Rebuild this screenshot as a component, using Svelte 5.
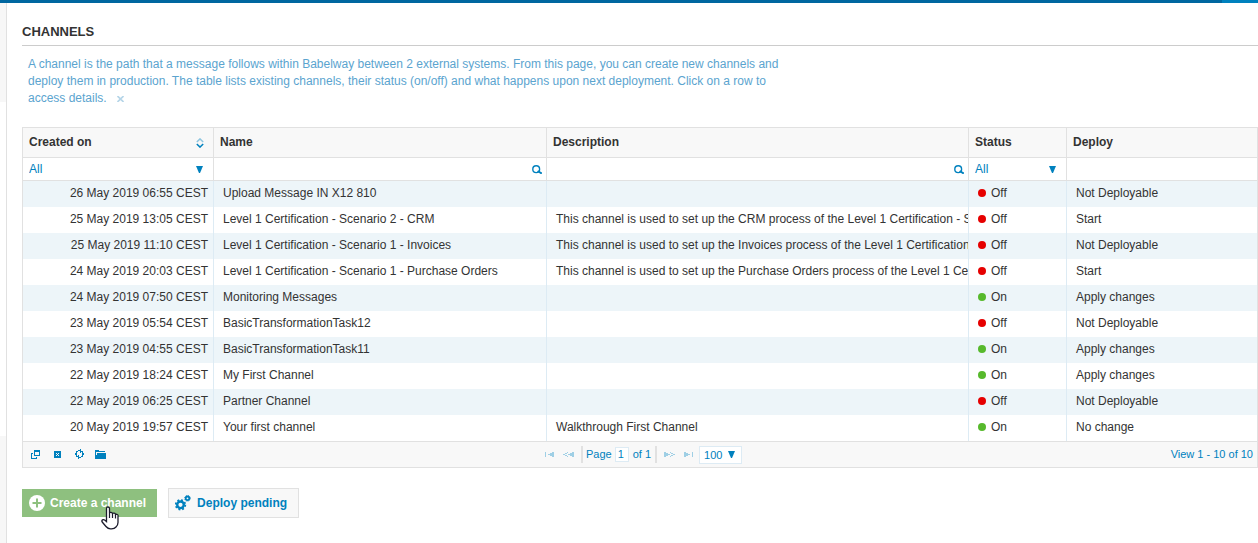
<script>
  const channels = [
    ['26 May 2019 06:55 CEST', 'Upload Message IN X12 810', '', 'Off', 'Not Deployable'],
    ['25 May 2019 13:05 CEST', 'Level 1 Certification - Scenario 2 - CRM', 'This channel is used to set up the CRM process of the Level 1 Certification - Scenario 2', 'Off', 'Start'],
    ['25 May 2019 11:10 CEST', 'Level 1 Certification - Scenario 1 - Invoices', 'This channel is used to set up the Invoices process of the Level 1 Certification - Scenario 1', 'Off', 'Not Deployable'],
    ['24 May 2019 20:03 CEST', 'Level 1 Certification - Scenario 1 - Purchase Orders', 'This channel is used to set up the Purchase Orders process of the Level 1 Certification', 'Off', 'Start'],
    ['24 May 2019 07:50 CEST', 'Monitoring Messages', '', 'On', 'Apply changes'],
    ['23 May 2019 05:54 CEST', 'BasicTransformationTask12', '', 'Off', 'Not Deployable'],
    ['23 May 2019 04:55 CEST', 'BasicTransformationTask11', '', 'On', 'Apply changes'],
    ['22 May 2019 18:24 CEST', 'My First Channel', '', 'On', 'Apply changes'],
    ['22 May 2019 06:25 CEST', 'Partner Channel', '', 'Off', 'Not Deployable'],
    ['20 May 2019 19:57 CEST', 'Your first channel', 'Walkthrough First Channel', 'On', 'No change']
  ].map(([created, name, description, status, deploy]) => ({ created, name, description, status, deploy }));
</script>

{#snippet caret()}
  <svg class="caret" width="7" height="7" viewBox="0 0 7 7" aria-hidden="true"><path d="M0 0h7L4 7H3z" /></svg>
{/snippet}

{#snippet search(label)}
  <label class="control find">
    <input type="text" aria-label={label} />
    <svg width="10" height="9" viewBox="0 0 10 9" aria-hidden="true">
      <circle cx="4.200" cy="4.200" r="3.400" fill="none" stroke="#0081be" stroke-width="1.400" />
      <path d="M6.500 6.500l2.500 1.500" stroke="#0081be" stroke-width="2" stroke-linecap="square" />
    </svg>
  </label>
{/snippet}

<div class="page">
  <header class="topbar"><span></span></header>
  <div class="layout">
    <aside><span></span><span></span></aside>
    <main>
      <h1>CHANNELS</h1>
      <p class="intro">
        A channel is the path that a message follows within Babelway between 2 external systems. From this page, you can create new channels and deploy them in production. The table lists existing channels, their status (on/off) and what happens upon next deployment. Click on a row to access details.
        <button class="close" aria-label="Close"><svg width="7" height="6" viewBox="0 0 7 6"><path d="M.5 0l6 6M6.5 0l-6 6" stroke="#b5d5e8" stroke-width="1.6" /></svg></button>
      </p>

      <section class="grid">
        <table>
          <colgroup><col class="c-date" /><col class="c-name" /><col /><col class="c-status" /><col class="c-deploy" /></colgroup>
          <thead>
            <tr class="titles">
              <th><div class="sortable">Created on
                <svg width="8" height="10" viewBox="0 0 8 10" fill="none" stroke-width="1.5" aria-hidden="true">
                  <path d="M.8 4L4 .9 7.200 4" stroke="#8fc6e0" /><path d="M.8 6L4 9.100 7.200 6" stroke="#0081be" />
                </svg></div></th>
              <th>Name</th><th>Description</th><th>Status</th><th>Deploy</th>
            </tr>
            <tr class="filters">
              <td><label class="control pick"><select aria-label="Created on"><option>All</option></select>{@render caret()}</label></td>
              <td>{@render search('Name')}</td>
              <td>{@render search('Description')}</td>
              <td><label class="control pick"><select aria-label="Status"><option>All</option></select>{@render caret()}</label></td>
              <td></td>
            </tr>
          </thead>
          <tbody>
            {#each channels as c}
              <tr>
                <td class="date">{c.created}</td>
                <td>{c.name}</td>
                <td>{c.description}</td>
                <td><span class="status"><i class:on={c.status === 'On'}></i>{c.status}</span></td>
                <td>{c.deploy}</td>
              </tr>
            {/each}
          </tbody>
        </table>

        <footer>
          <div class="tools">
            <button aria-label="Columns"><svg width="12" height="12" viewBox="0 -1 12 12"><path d="M3 0h6v6H3zM4 2v3h4V2zM0 3h2v1H1v4h4V7h1v2H0z" fill-rule="evenodd" /></svg></button>
            <button aria-label="Export"><svg width="12" height="12" viewBox="-1 -1 12 12"><path d="M1 1h7v7H1zM3 3v1h1V3zM5 3v1h1V3zM4 4v1h1V4zM3 5v1h1V5zM5 5v1h1V5z" fill-rule="evenodd" /></svg></button>
            <button aria-label="Refresh"><svg width="12" height="12" viewBox="-2 -1 12 12"><path d="M5 -1h1v1H5zM3 0h3v1H3zM1 1h2v1H1zM5 1h3v1H5zM1 2h1v1H1zM5 2h1v1H5zM7 2h1v1H7zM0 3h2v2H0zM7 3h2v2H7zM1 5h1v1H1zM3 5h1v1H3zM7 5h1v1H7zM1 6h3v1H1zM6 6h2v1H6zM3 7h3v1H3zM3 8h1v1H3z" /></svg></button>
            <button aria-label="Archive"><svg width="12" height="12" viewBox="-1 -1 12 12"><path d="M0 0h4v1h6v1H1v7H0zM2 3h9v6H1V5h1z" /></svg></button>
          </div>
          <div class="pager">
            <button aria-label="First page"><svg width="9" height="5" viewBox="0 0 9 5"><path d="M0 0h1v5H0zM3 2h2V1h2V0h2v5H7V4H5V3H3z" /></svg></button>
            <button aria-label="Previous page"><svg width="11" height="5" viewBox="0 0 11 5"><path d="M0 2h2V1h2v1H2v1h2v1H2V3H0zM4 0h1v1H4zM4 4h1v1H4zM5 2h2V1h2V0h2v5H9V4H7V3H5z" /></svg></button>
            <label class="pageno">Page <input type="text" value="1" /> <span>of 1</span></label>
            <button aria-label="Next page"><svg width="11" height="5" viewBox="0 0 11 5"><path d="M0 0h2v1h2v1h2v1H4v1H2v1H0zM6 0h1v1H6zM7 1h2v1h2v1H9v1H7V3h2V2H7zM6 4h1v1H6z" /></svg></button>
            <button aria-label="Last page"><svg width="9" height="5" viewBox="0 0 9 5"><path d="M0 0h2v1h2v1h2v1H4v1H2v1H0zM8 0h1v5H8z" /></svg></button>
            <label class="size"><select aria-label="Rows per page"><option>100</option></select>{@render caret()}</label>
          </div>
          <div class="view">View 1 - 10 of 10</div>
        </footer>
      </section>

      <div class="actions">
        <button class="create">
          <svg width="16" height="16" viewBox="0 0 16 16" aria-hidden="true"><circle cx="8" cy="8" r="8" fill="#fff" /><path d="M8 3.500v9M3.500 8h9" stroke="#8ec07f" stroke-width="2" /></svg>
          Create a channel
          <svg class="pointer" width="18" height="24" viewBox="0 0 18 24" aria-hidden="true"><path d="M5.500 14V2.500Q5.500 1 7 1T8.500 2.500V7Q8.700 6.300 10 6.400T11.500 7.600Q12 7 13.200 7.200T14.500 8.500Q15.200 8 16.300 8.500T17 10.500v6q0 2.500-2 4.500Q13.500 22.800 10.500 22.800H9.500Q7 22.800 5 20.500L1.200 16Q.4 14.700 1.500 13.900T4 14.200l1.500 1.300z" fill="#fff" stroke="#1c1c2c" stroke-width="1.300" /><path d="M8.500 7v5M11.500 8v4M14.500 9v3.500" stroke="#1c1c2c" stroke-width="1.200" /></svg>
        </button>
        <button class="deploy">
          <svg width="16" height="16" viewBox="0 0 16 16" fill="none" stroke="#0081be" aria-hidden="true">
            <circle cx="5.500" cy="9.800" r="3.300" stroke-width="2.400" /><circle cx="5.500" cy="9.800" r="4.800" stroke-width="1.800" stroke-dasharray="1.880 1.890" />
            <circle cx="12.500" cy="3.300" r="1.800" stroke-width="1.800" /><circle cx="12.500" cy="3.300" r="2.800" stroke-width="1" stroke-dasharray="1.100 1.100" />
          </svg>
          Deploy pending
        </button>
      </div>
    </main>
  </div>
</div>

<style>
  :global(body) { margin: 0; background: #fff; }
  .page { min-height: 100vh; display: flex; flex-direction: column; font: 12px/17px "Liberation Sans", Arial, sans-serif; color: #333; }
  .page * { box-sizing: border-box; }
  button, input, select { font: inherit; color: inherit; border: 0; padding: 0; margin: 0; background: none; appearance: none; border-radius: 0; }
  button { cursor: pointer; }
  svg { display: block; flex: none; }
  .topbar { height: 3px; background: #0067a0; display: flex; justify-content: flex-end; }
  .topbar span { width: 36px; background: #0081be; }
  .layout { flex: 1; display: flex; }
  aside { width: 7px; flex: none; border-right: 1px solid #e1e1e1; display: flex; flex-direction: column; justify-content: space-between; }
  aside span { height: 99px; background: #f7f7f7; }
  aside span:last-child { height: 108px; }
  main { flex: 1; min-width: 0; padding-left: 15px; }
  h1 { margin: 0; padding: 19px 0 3px; font-size: 13px; line-height: 20px; font-weight: 700; border-bottom: 1px solid #ccc; }
  .intro { margin: 0; padding: 10px 6px 20px; max-width: 780px; color: #5ba4cf; }
  .close { margin-left: 7px; }

  .grid { border: 1px solid #e1e1e1; }
  table { width: 100%; table-layout: fixed; border-collapse: separate; border-spacing: 0; }
  .c-date { width: 191px; }
  .c-name { width: 333px; }
  .c-status { width: 98px; }
  .c-deploy { width: 190px; }
  th, td { padding: 0; text-align: left; border-right: 1px solid #e1e1e1; white-space: nowrap; overflow: hidden; }
  tr > :last-child { border-right: 0; }
  th { height: 30px; padding: 0 6px; background: #f8f8f8; border-bottom: 1px solid #e1e1e1; }
  .sortable { display: flex; align-items: center; justify-content: space-between; padding-right: 3px; }
  .filters td { height: 23px; border-bottom: 1px solid #e1e1e1; }
  .control { display: grid; align-items: center; color: #0081be; }
  .control > * { grid-area: 1 / 1; }
  .control input, .control select { width: 100%; height: 22px; padding: 0 6px; outline: 0; }
  .control svg { justify-self: end; pointer-events: none; }
  .pick svg { margin-right: 10px; }
  .find svg { margin-right: 4px; }
  .caret { fill: #0081be; }
  tbody td { height: 26px; padding: 0 0 2px 9px; border-color: #ddebf4; }
  tbody tr:nth-child(odd) { background: #edf5f9; }
  tbody .date { text-align: right; padding: 0 5px 2px 0; }
  .status { display: flex; align-items: center; gap: 5px; }
  .status i { width: 8px; height: 8px; border-radius: 50%; background: #e60000; }
  .status .on { background: #57b92c; }

  footer { height: 26px; border-top: 1px solid #e1e1e1; background: #f8f8f8; color: #0081be; font-size: 11px; display: grid; grid-template-columns: 1fr auto 1fr; align-items: center; }
  footer svg { fill: #0081be; shape-rendering: crispEdges; }
  .tools { display: flex; gap: 9px; padding-left: 8px; }
  .pager { display: flex; align-items: center; gap: 9px; padding-left: 7px; }
  .pager button svg { fill: #9fcfe5; }
  .pager .pageno { margin: 0 -2px; }
  .pageno { display: flex; align-items: center; padding: 0 4px 0 3px; border: solid #e1e1e1; border-width: 0 2px; }
  .pageno input { width: 14px; height: 15px; padding: 0 2px; margin: 0 4px 0 3px; background: #fff; border: 1px solid #ddebf4; }
  .size { display: grid; align-items: center; margin-left: -3px; border: 1px solid #ddebf4; background: #fff; }
  .size > * { grid-area: 1 / 1; }
  .size select { width: 41px; height: 16px; padding-left: 4px; }
  .size svg { justify-self: end; margin-right: 6px; pointer-events: none; shape-rendering: auto; }
  .view { text-align: right; padding-right: 4px; }

  .actions { display: flex; align-items: flex-start; gap: 11px; padding: 20px 0 26px; }
  .actions button { display: flex; align-items: center; font-weight: 700; border: 1px solid #e1e1e1; }
  .actions .create { position: relative; height: 28px; margin-top: 1px; padding: 0 10px 0 6px; gap: 5px; border-color: #8ec07f; background: #8ec07f; color: #fff; }
  .actions .deploy { height: 30px; padding: 0 11px 0 6px; gap: 6px; background: #f8f8f8; color: #0081be; }
  .pointer { position: absolute; left: 78px; top: 16px; z-index: 1; }
</style>
